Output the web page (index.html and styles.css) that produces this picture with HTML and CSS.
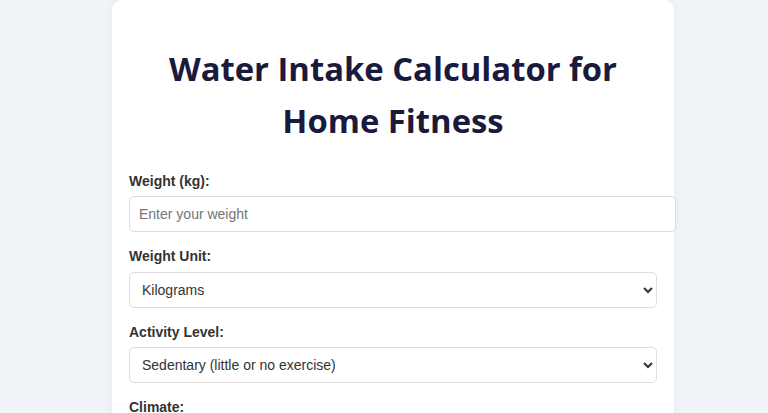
FILE: index.html
```html
<!DOCTYPE html>
<html lang="en">
<head>
  <meta charset="UTF-8">
  <meta name="viewport" content="width=device-width, initial-scale=1.0">
  <title>Water Intake Calculator for Home Fitness</title>
  <link rel="stylesheet" href="styles.css">
</head>
<body>
  <div class="container">
    <h1>Water Intake Calculator for Home Fitness</h1>

    <form class="calc-form">
      <label for="weight">Weight (kg):</label>
      <input type="number" id="weight" placeholder="Enter your weight">

      <label for="unit">Weight Unit:</label>
      <select id="unit">
        <option value="kg">Kilograms</option>
        <option value="lb">Pounds</option>
      </select>

      <label for="activity">Activity Level:</label>
      <select id="activity">
        <option value="sedentary">Sedentary (little or no exercise)</option>
        <option value="light">Light (1-3 days a week)</option>
        <option value="moderate">Moderate (3-5 days a week)</option>
        <option value="active">Active (6-7 days a week)</option>
      </select>

      <label for="climate">Climate:</label>
      <select id="climate">
        <option value="normal">Normal</option>
        <option value="hot">Hot / Humid</option>
        <option value="cold">Cold</option>
      </select>
    </form>
  </div>
</body>
</html>
```

FILE: styles.css
```css
/* Global styles */
body {
  margin: 0;
  font-family: 'Liberation Sans', Arial, sans-serif;
  background-color: #f0f4f8;
  color: #333;
  line-height: 1.6;
}

/* Card */
.container {
  width: 528px;
  margin-left: 112px;
  padding: 22px 17px 20px;
  background: #fff;
  border-radius: 10px;
  box-shadow: 0 0 10px rgba(0, 0, 0, 0.05);
}

h1 {
  font-family: 'Open Sans', 'Noto Sans', sans-serif;
  font-size: 32.8px;
  line-height: 51.5px;
  font-weight: 700;
  text-align: center;
  color: #1a1a3d;
  margin: 21px 0 24px;
}

/* Form */
.calc-form label {
  display: block;
  font-size: 14px;
  font-weight: bold;
  color: #333;
  margin-bottom: 4px;
}

.calc-form input,
.calc-form select {
  width: 100%;
  padding: 9px 8px 9px 9px;
  margin-bottom: 13px;
  font-family: 'Liberation Sans', Arial, sans-serif;
  font-size: 14px;
  border: 1px solid #ddd;
  border-radius: 5px;
  background: #fff;
  color: #333;
}

.calc-form select {
  height: 36px;
  padding: 8px;
}
```
